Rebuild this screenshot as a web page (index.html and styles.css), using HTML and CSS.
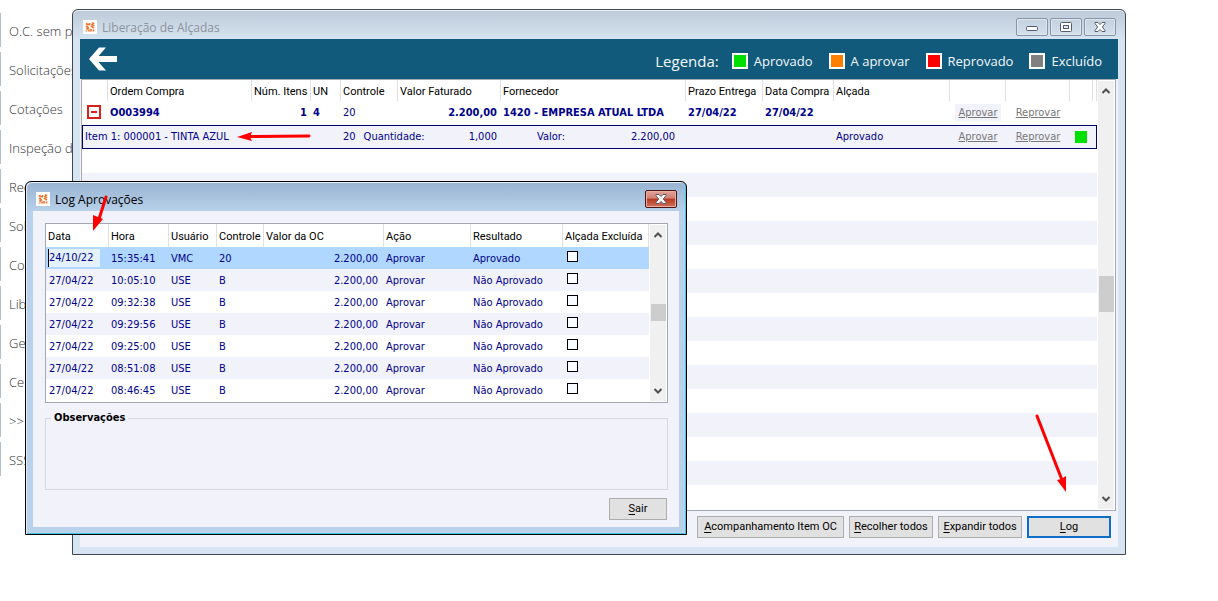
FILE: index.html
```html
<!DOCTYPE html>
<html lang="pt-BR">
<head>
<meta charset="utf-8">
<title>Liberação de Alçadas</title>
<link rel="stylesheet" href="styles.css">
</head>
<body>
<svg class="defs" aria-hidden="true">
  <defs>
    <symbol id="logo" viewBox="0 0 14 14">
      <rect width="14" height="14" fill="#fff"/>
      <path d="M3 3.500l2.500 1.500M11 3L8.500 5M3 6l2 1.500M8 6l3 2M6.500 3v2.500M3.500 9.500L6 7.500M3.500 11.500v-1M6 9.500v2M8 9v2.500M10.500 9.500v2M9 3h1.500M10.500 5v1" stroke="#f0742c" stroke-width="1.700" fill="none"/>
    </symbol>
    <symbol id="up" viewBox="0 0 10 8"><path d="M1.500 6L5 2.500 8.500 6" fill="none" stroke="#505050" stroke-width="2"/></symbol>
    <symbol id="down" viewBox="0 0 10 8"><path d="M1.500 2L5 5.500 8.500 2" fill="none" stroke="#505050" stroke-width="2"/></symbol>
    <symbol id="close" viewBox="0 0 12 10"><path d="M1 .5h3l2 2L8 .5h3v1L8.300 5 11 8.500v1H8l-2-2-2 2H1v-1L3.700 5 1 1.500z" fill="#fff" stroke="#545c6a"/></symbol>
  </defs>
</svg>

<nav class="sidebar">
  <a href="#">O.C. sem prazo</a>
  <a href="#">Solicitações</a>
  <a href="#">Cotações</a>
  <a href="#">Inspeção de</a>
  <a href="#">Rec</a>
  <a href="#">Sol</a>
  <a href="#">Co</a>
  <a href="#">Lib</a>
  <a href="#">Ge</a>
  <a href="#">Ce</a>
  <a href="#">&gt;&gt;</a>
  <a href="#">SSS</a>
</nav>

<section class="window main-window">
  <header class="titlebar">
    <svg class="logo"><use href="#logo"/></svg>
    <h1>Liberação de Alçadas</h1>
    <div class="captions">
      <button aria-label="Minimizar"><svg width="12" height="10"><rect x=".5" y="4.500" width="11" height="4" rx="1" fill="#fff" stroke="#545c6a"/></svg></button>
      <button aria-label="Maximizar"><svg width="12" height="10"><rect x=".5" y=".5" width="11" height="9" rx="1" fill="#fff" stroke="#545c6a"/><rect x="3.500" y="3.500" width="5" height="3" fill="#dfe8f2" stroke="#545c6a"/></svg></button>
      <button aria-label="Fechar"><svg width="12" height="10"><use href="#close"/></svg></button>
    </div>
  </header>
  <div class="client">
    <div class="banner">
      <button class="back" aria-label="Voltar"><svg width="28" height="24" viewBox="0 0 28 24"><path d="M0 12L10 .5h7L9.500 9H28v6H9.500l7.500 8.500h-7z" fill="#fff"/></svg></button>
      <div class="legend">
        <strong>Legenda:</strong>
        <span><i class="green"></i>Aprovado</span>
        <span><i class="orange"></i>A aprovar</span>
        <span><i class="red"></i>Reprovado</span>
        <span><i class="gray"></i>Excluído</span>
      </div>
    </div>
    <div class="grid orders">
      <table>
        <colgroup>
          <col class="w26"><col class="w144"><col class="w59"><col class="w30"><col class="w57"><col class="w103"><col class="w185"><col class="w77"><col class="w71"><col><col class="w56"><col class="w64"><col class="w23"><col class="w4">
        </colgroup>
        <thead>
          <tr><th></th><th>Ordem Compra</th><th>Núm. Itens</th><th>UN</th><th>Controle</th><th>Valor Faturado</th><th>Fornecedor</th><th>Prazo Entrega</th><th>Data Compra</th><th>Alçada</th><th></th><th></th><th></th><th></th></tr>
        </thead>
        <tbody>
          <tr class="order">
            <td class="toggle"><button aria-label="Recolher"><svg width="14" height="14"><rect x="1" y="1" width="12" height="12" fill="#fff" stroke="#d8201c" stroke-width="2"/><path d="M4 7h6" stroke="#d8201c" stroke-width="2"/></svg></button></td>
            <td>O003994</td><td class="num">1</td><td>4</td><td class="plain">20</td><td class="num">2.200,00</td><td>1420 - EMPRESA ATUAL LTDA</td><td>27/04/22</td><td>27/04/22</td><td></td>
            <td class="action"><a class="focus" href="#">Aprovar</a></td><td class="action"><a href="#">Reprovar</a></td><td></td><td></td>
          </tr>
          <tr class="item">
            <td colspan="4"><div class="pair"><span>Item 1: 000001 - TINTA AZUL</span><svg width="74" height="12"><path d="M12 6.500L72 6" stroke="#f00" stroke-width="3" stroke-linecap="round"/><path d="M0 7l15-5-2 5 2 4z" fill="#f00"/></svg></div></td>
            <td colspan="2"><div class="pair quantity"><span>20</span><span>Quantidade:</span><span class="last">1,000</span></div></td>
            <td><div class="pair amount"><span>Valor:</span><span class="last">2.200,00</span></div></td>
            <td></td><td></td><td>Aprovado</td>
            <td class="action"><a href="#">Aprovar</a></td><td class="action"><a href="#">Reprovar</a></td><td class="state"><i></i></td><td></td>
          </tr>
          <tr><td colspan="14"></td></tr><tr><td colspan="14"></td></tr><tr><td colspan="14"></td></tr>
          <tr><td colspan="14"></td></tr><tr><td colspan="14"></td></tr><tr><td colspan="14"></td></tr>
          <tr><td colspan="14"></td></tr><tr><td colspan="14"></td></tr><tr><td colspan="14"></td></tr>
          <tr><td colspan="14"></td></tr><tr><td colspan="14"></td></tr><tr><td colspan="14"></td></tr>
          <tr><td colspan="14"></td></tr><tr><td colspan="14"></td></tr><tr><td colspan="14"></td></tr>
        </tbody>
      </table>
      <div class="scrollbar"><svg><use href="#up"/></svg><b></b><svg><use href="#down"/></svg></div>
    </div>
    <footer class="actions">
      <button class="btn wide"><u>A</u>companhamento Item OC</button>
      <button class="btn"><u>R</u>ecolher todos</button>
      <button class="btn"><u>E</u>xpandir todos</button>
      <button class="btn default"><u>L</u>og</button>
    </footer>
  </div>
  <svg class="arrow-log" width="36" height="80"><path d="M4 3l25 64" stroke="#f00" stroke-width="3" stroke-linecap="round"/><path d="M33 79L24 67l4-1 5-3z" fill="#f00"/></svg>
</section>

<section class="window log-window">
  <header class="titlebar">
    <svg class="logo"><use href="#logo"/></svg>
    <h2>Log Aprovações</h2>
    <div class="captions"><button class="close" aria-label="Fechar"><svg width="12" height="10"><use href="#close"/></svg></button></div>
  </header>
  <div class="client">
    <div class="grid log">
      <table>
        <colgroup><col class="w63"><col class="w60"><col class="w48"><col class="w47"><col><col class="w87"><col class="w92"><col class="w86"></colgroup>
        <thead><tr><th>Data</th><th>Hora</th><th>Usuário</th><th>Controle</th><th>Valor da OC</th><th>Ação</th><th>Resultado</th><th>Alçada Excluída</th></tr></thead>
        <tbody>
          <tr class="selected"><td><input class="edit" type="text" value="24/10/22" aria-label="Data"></td><td>15:35:41</td><td>VMC</td><td>20</td><td class="num">2.200,00</td><td>Aprovar</td><td>Aprovado</td><td><input type="checkbox" aria-label="Alçada Excluída"></td></tr>
          <tr><td>27/04/22</td><td>10:05:10</td><td>USE</td><td>B</td><td class="num">2.200,00</td><td>Aprovar</td><td>Não Aprovado</td><td><input type="checkbox" aria-label="Alçada Excluída"></td></tr>
          <tr><td>27/04/22</td><td>09:32:38</td><td>USE</td><td>B</td><td class="num">2.200,00</td><td>Aprovar</td><td>Não Aprovado</td><td><input type="checkbox" aria-label="Alçada Excluída"></td></tr>
          <tr><td>27/04/22</td><td>09:29:56</td><td>USE</td><td>B</td><td class="num">2.200,00</td><td>Aprovar</td><td>Não Aprovado</td><td><input type="checkbox" aria-label="Alçada Excluída"></td></tr>
          <tr><td>27/04/22</td><td>09:25:00</td><td>USE</td><td>B</td><td class="num">2.200,00</td><td>Aprovar</td><td>Não Aprovado</td><td><input type="checkbox" aria-label="Alçada Excluída"></td></tr>
          <tr><td>27/04/22</td><td>08:51:08</td><td>USE</td><td>B</td><td class="num">2.200,00</td><td>Aprovar</td><td>Não Aprovado</td><td><input type="checkbox" aria-label="Alçada Excluída"></td></tr>
          <tr><td>27/04/22</td><td>08:46:45</td><td>USE</td><td>B</td><td class="num">2.200,00</td><td>Aprovar</td><td>Não Aprovado</td><td><input type="checkbox" aria-label="Alçada Excluída"></td></tr>
        </tbody>
      </table>
      <div class="scrollbar"><svg><use href="#up"/></svg><b></b><svg><use href="#down"/></svg></div>
    </div>
    <fieldset class="notes"><legend>Observações</legend></fieldset>
    <footer class="dialog-actions"><button class="btn small"><u>S</u>air</button></footer>
  </div>
  <svg class="arrow-date" width="18" height="40"><path d="M14 4L7 26" stroke="#f00" stroke-width="3" stroke-linecap="round"/><path d="M1 38V22l5 2 5 2z" fill="#f00"/></svg>
</section>
</body>
</html>
```
FILE: styles.css
```css
* { box-sizing: border-box; }
body {
  margin: 0;
  min-height: 100vh;
  position: relative;
  overflow: hidden;
  background: #fff;
  font-family: "DejaVu Sans Condensed", "DejaVu Sans", sans-serif;
  font-size: 11px;
}
h1, h2 { margin: 0; padding-top: 2px; font-weight: 400; font-size: 12px; line-height: 18px; }
button { padding: 0; border: 0; background: none; font: inherit; }
svg { display: block; flex: none; }
.defs { position: absolute; width: 0; height: 0; }

/* Side menu */
.sidebar { display: flex; flex-direction: column; gap: 5px; padding-top: 13px; width: 160px; }
.sidebar a {
  border-left: 1px solid #b4c0c8;
  padding: 2px 0 0 8px;
  font: 300 13px/32px "Open Sans", sans-serif;
  color: #333;
  text-decoration: none;
  white-space: nowrap;
}

/* Window frames */
.window { position: absolute; border: 1px solid #40454e; border-radius: 6px 6px 0 0; padding: 0 7px 7px; }
.main-window { left: 72px; right: 92px; top: 9px; background: linear-gradient(#bccad9, #d7e4f1 30px); box-shadow: inset 0 1px #eef3f8; }
.log-window {
  left: 25px; right: 531px; top: 181px;
  border-color: #000;
  background: linear-gradient(#98b4d2, #b9d1ea 30px);
  box-shadow: inset 1px 1px #e4eefa, inset -1px -1px #40c8e4;
}
.titlebar { display: flex; align-items: center; gap: 5px; height: 29px; padding: 5px 2px 0 3px; font-family: "Open Sans", sans-serif; }
.logo { width: 14px; height: 14px; }
.main-window h1 { color: #8b939c; }
.captions { display: flex; gap: 2px; margin-left: auto; }
.captions button {
  display: flex; align-items: center; justify-content: center;
  width: 32px; height: 18px;
  border: 1px solid #8793a3; border-radius: 2px;
  box-shadow: inset 0 0 0 1px #dfe8f1;
}
.captions .close { border-color: #4c1414; background: linear-gradient(#e4a396, #d08072 45%, #b83820 50%, #d07058); box-shadow: inset 0 0 0 1px #e8b0a4; }
.client { background: #f2f2fb; }

/* Banner and legend */
.banner { display: flex; align-items: center; justify-content: space-between; height: 40px; padding: 4px 16px 0 9px; background: #125a7c; color: #f4f8fa; font-family: "Open Sans", sans-serif; }
.back { padding-bottom: 5px; }
.legend { display: flex; align-items: center; gap: 16px; font-size: 13px; line-height: 20px; }
.legend strong { margin-right: -3px; font-weight: 400; font-size: 15px; }
.legend span { display: flex; align-items: center; gap: 6px; }
.legend i { width: 16px; height: 16px; border: 2px solid #fff; }
.green { background: #00e000; }
.orange { background: #ff8000; }
.red { background: #f00; }
.gray { background: #808080; }

/* Data grids */
.grid { display: flex; padding-bottom: 1px; background: #fff; border: 1px solid #a4a8b0; }
.grid table { flex: 1; width: 0; table-layout: fixed; border-spacing: 0; color: #00008c; }
th { padding: 2px 0 0 2px; border-right: 1px solid #e0e0e4; font: 400 11px/19px Roboto, sans-serif; color: #000; text-align: left; white-space: nowrap; }
td { padding: 0 3px; white-space: nowrap; }
.num { text-align: right; }
.scrollbar { display: flex; flex-direction: column; align-items: center; width: 16px; margin: 1px 1px 0 1px; background: #f0f0f0; }
.scrollbar svg { width: 10px; height: 8px; margin: 6px 0; }
.scrollbar b { width: 15px; background: #cdcdcd; }

.orders { margin: 0 2px 0 1px; }
.orders td { height: 24px; padding: 0 4px 2px 2px; }
.orders tr:nth-child(n+3):nth-child(even) td { background: #f2f2fb; }
.orders .scrollbar b { height: 36px; margin: 175px 0 auto; }
.order { font-weight: 700; }
.order .plain { font-weight: 400; }
.toggle button { display: block; margin-left: 3px; }
.orders .action { padding: 0 2px 2px; text-align: center; font-weight: 400; }
.action a { color: #777; padding: 2px 4px; }
.action .focus { background: #f2f2fb; }
.item td { background: #f2f2fb; border: solid #000068; border-width: 1px 0; }
.item td:first-child { border-left-width: 1px; }
.item td:last-child { border-right-width: 1px; }
.orders .state { padding: 0 4px 0 5px; }
.item i { display: block; width: 12px; height: 12px; background: #00e000; }
.pair { display: flex; align-items: center; gap: 8px; }
.pair .last { margin-left: auto; }
.amount { padding: 0 7px 0 34px; }

.log { margin: 0 11px 8px 12px; }
.log th { line-height: 21px; }
.log td { height: 22px; padding: 0 6px 0 2px; }
.log td:first-child { padding-left: 3px; }
.log .scrollbar b { height: 17px; margin: 59px 0 auto; }
.log tr:nth-child(even) td { background: #f2f2fb; }
.log .selected td { background: #b0d7ff; }
.log input { display: block; margin: 0; }
.log .selected td:first-child { padding-left: 2px; }
.edit { width: 52px; height: 18px; padding: 0 0 2px; border: 0; background: #e4f1ff; color: inherit; font: inherit; border-left: 1px solid #000; }
.log input[type="checkbox"] { appearance: none; width: 11px; height: 11px; margin: 0 0 3px 2px; border: 1px solid #000; background: #f8fbff; }

/* Dialog body */
.log-window .client { padding: 12px 0 7px; }
.notes { margin: 0 11px 8px 12px; padding: 0 5px; min-width: 0; min-height: 79px; border: 1px solid #d8d8e0; }
.notes legend { padding: 0 3px; font: 700 11px/14px "DejaVu Sans Condensed", sans-serif; }
.dialog-actions { display: flex; justify-content: flex-end; padding-right: 12px; }

/* Buttons */
.actions { display: flex; justify-content: flex-end; gap: 5px; padding: 5px 7px 9px; }
.btn { width: 84px; height: 22px; border: 1px solid #adadad; background: #e1e1e1; color: #000; font: 11px/18px Roboto, sans-serif; white-space: nowrap; }
.btn u { text-underline-offset: 2px; }
.wide { width: 147px; }
.small { width: 58px; }
.default { border: 2px solid #0f6fc6; }

.arrow-log { position: absolute; right: 56px; bottom: 61px; }
.arrow-date { position: absolute; left: 66px; top: 11px; }

/* Column widths */
.w4 { width: 4px; } .w23 { width: 23px; } .w26 { width: 26px; } .w30 { width: 30px; }
.w47 { width: 47px; } .w48 { width: 48px; } .w56 { width: 56px; } .w57 { width: 57px; }
.w59 { width: 59px; } .w60 { width: 60px; } .w63 { width: 63px; } .w64 { width: 64px; }
.w71 { width: 71px; } .w77 { width: 77px; } .w86 { width: 86px; } .w87 { width: 87px; }
.w92 { width: 92px; } .w103 { width: 103px; } .w144 { width: 144px; } .w185 { width: 185px; }
```
